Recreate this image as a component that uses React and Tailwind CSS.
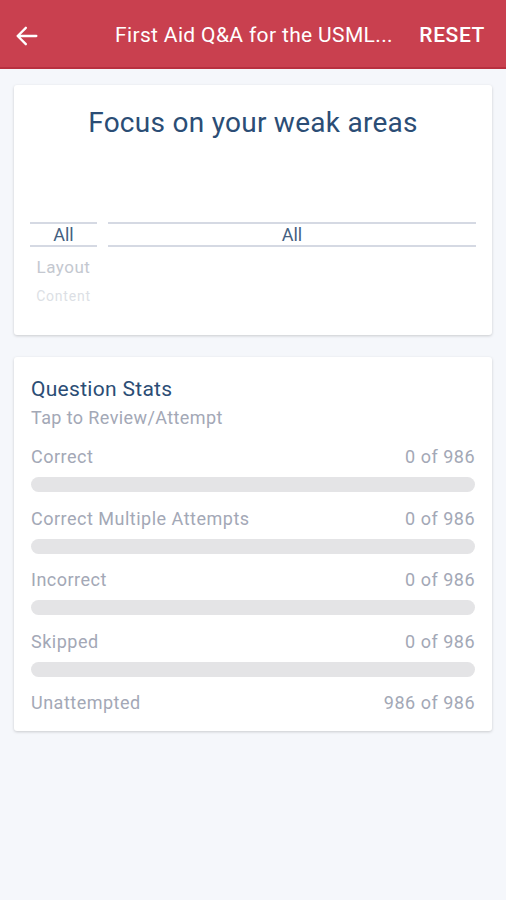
import React from 'react';

const stats = [
  { label: 'Correct', value: '0 of 986', bar: true },
  { label: 'Correct Multiple Attempts', value: '0 of 986', bar: true },
  { label: 'Incorrect', value: '0 of 986', bar: true },
  { label: 'Skipped', value: '0 of 986', bar: true },
  { label: 'Unattempted', value: '986 of 986', bar: false },
];

export default function App() {
  return (
    <div className="min-h-[900px] bg-[#f5f7fb] font-['Roboto',sans-serif]">
      <header className="flex h-[69px] items-center border-b-2 border-[#b8303f] bg-[#c9404f] pt-[5px] pl-[13px] pr-[21px] text-white">
        <svg width="28" height="28" viewBox="0 0 24 24" fill="none" stroke="white" strokeWidth="2" strokeLinecap="round" strokeLinejoin="round">
          <path d="M20 12H4M11 5l-7 7 7 7" />
        </svg>
        <div className="ml-[74px] flex-1 truncate text-[21px] tracking-[0.35px]">First Aid Q&amp;A for the USML...</div>
        <div className="ml-[20px] text-[21px] font-medium tracking-[0.6px]">RESET</div>
      </header>

      <main className="flex flex-col gap-[22px] px-[14px] pt-[16px]">
        <section className="h-[250px] rounded-[3px] bg-white shadow-[0_1px_3px_rgba(0,0,0,0.18)]">
          <h1 className="pt-[17px] text-center text-[28px] tracking-[0.27px] text-[#2b4d75]">Focus on your weak areas</h1>
          <div className="mt-[78px] flex gap-[11px] px-[16px]">
            <div className="w-[67px]">
              <div className="border-y-2 border-[#d5d9e3] py-[1px] text-center text-[18px] leading-[19px] text-[#44607f]">All</div>
              <div className="mt-[8px] text-center text-[17px] tracking-[0.5px] text-[#c4c8d0]">Layout</div>
              <div className="mt-[5px] text-center text-[14px] tracking-[0.8px] text-[#dcdfe5]">Content</div>
            </div>
            <div className="flex-1">
              <div className="border-y-2 border-[#d5d9e3] py-[1px] text-center text-[18px] leading-[19px] text-[#44607f]">All</div>
            </div>
          </div>
        </section>

        <section className="rounded-[3px] bg-white px-[17px] pt-[18px] pb-[16px] shadow-[0_1px_3px_rgba(0,0,0,0.18)]">
          <h2 className="text-[21px] leading-[28px] tracking-[0.3px] text-[#2b4d75]">Question Stats</h2>
          <p className="mt-[2px] text-[18px] leading-[26px] tracking-[0.4px] text-[#a3a8b6]">Tap to Review/Attempt</p>
          <div className="mt-[14px] flex flex-col">
            {stats.map((s) => (
              <div key={s.label} className={s.bar ? 'h-[61.5px]' : ''}>
                <div className="flex justify-between text-[18px] leading-[24px] tracking-[0.5px] text-[#a3a8b6]">
                  <span>{s.label}</span>
                  <span>{s.value}</span>
                </div>
                {s.bar && <div className="mt-[8px] h-[15px] rounded-full bg-[#e4e4e6]" />}
              </div>
            ))}
          </div>
        </section>
      </main>
    </div>
  );
}
